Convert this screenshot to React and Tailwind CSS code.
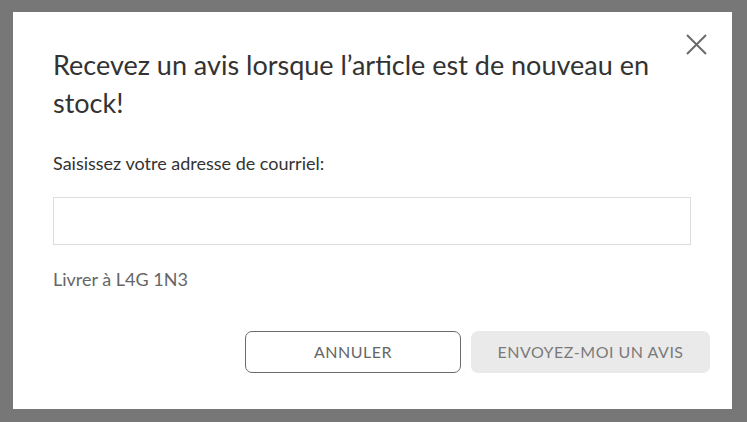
import React, { useState } from 'react';

const CloseIcon = () => (
  <svg className="w-[21px] h-[21px]" viewBox="0 0 21 21" fill="none" stroke="#6b6b6b" strokeWidth={2}>
    <path d="M1 1l19 19M20 1L1 20" />
  </svg>
);

export default function App() {
  const [email, setEmail] = useState('');

  return (
    <div className="min-h-[422px] w-full bg-[#777777] pt-[12px] pl-[13px] pr-[15px] pb-[13px] font-['Lato',sans-serif]">
      <div className="relative bg-white w-[719px] h-[397px] pt-[34px] pl-[40px] pr-[41px]">
        <button className="absolute top-[22px] right-[25px] block">
          <CloseIcon />
        </button>

        <h2 className="w-[610px] text-[27px] leading-[38px] text-[#333333]">
          Recevez un avis lorsque l’article est de nouveau en stock!
        </h2>

        <label className="block mt-[29px] text-[18px] leading-[24px] text-[#333333]">
          Saisissez votre adresse de courriel:
        </label>

        <input
          type="email"
          value={email}
          onChange={(e) => setEmail(e.target.value)}
          className="block mt-[22px] w-full h-[48px] border border-[#dddddd] px-3 text-[16px] outline-none"
        />

        <p className="mt-[22px] text-[18px] leading-[24px] text-[#666666]">Livrer à L4G 1N3</p>

        <div className="mt-[40px] mr-[-19px] flex justify-end gap-[10px]">
          <button className="w-[216px] h-[42px] rounded-[7px] border border-[#6b6b6b] text-[16px] tracking-[0.5px] text-[#666666]">
            ANNULER
          </button>
          <button className="w-[239px] h-[42px] rounded-[7px] bg-[#ebeaea] text-[16px] tracking-[0.5px] text-[#7a7a7a]">
            ENVOYEZ-MOI UN AVIS
          </button>
        </div>
      </div>
    </div>
  );
}
